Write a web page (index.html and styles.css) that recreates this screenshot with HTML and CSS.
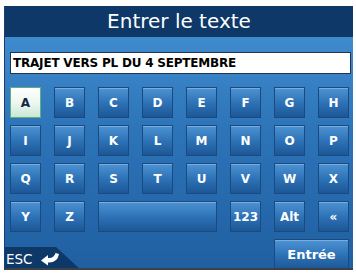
FILE: index.html
```html
<!DOCTYPE html>
<html>
<head>
<meta charset="utf-8">
<link rel="stylesheet" href="styles.css">
</head>
<body>
<div class="screen">
  <div class="header">Entrer le texte</div>
  <div class="body">
    <div class="input">TRAJET VERS PL DU 4 SEPTEMBRE</div>
    <div class="keys">
      <div class="key sel">A</div>
      <div class="key">B</div>
      <div class="key">C</div>
      <div class="key">D</div>
      <div class="key">E</div>
      <div class="key">F</div>
      <div class="key">G</div>
      <div class="key">H</div>
      <div class="key">I</div>
      <div class="key">J</div>
      <div class="key">K</div>
      <div class="key">L</div>
      <div class="key">M</div>
      <div class="key">N</div>
      <div class="key">O</div>
      <div class="key">P</div>
      <div class="key">Q</div>
      <div class="key">R</div>
      <div class="key">S</div>
      <div class="key">T</div>
      <div class="key">U</div>
      <div class="key">V</div>
      <div class="key">W</div>
      <div class="key">X</div>
      <div class="key">Y</div>
      <div class="key">Z</div>
      <div class="key space"></div>
      <div class="key">123</div>
      <div class="key">Alt</div>
      <div class="key small">«</div>
      <div class="esc">ESC
        <svg class="ret" width="20" height="14" viewBox="0 0 20 14"><path d="M1 8.5 L8 3 L8 6 Q14 6.5 15.5 1 L19 2 Q17.5 11 8 10.5 L8 13.5 Z" fill="#fff"/></svg>
      </div>
      <div class="key enter">Entrée</div>
    </div>
  </div>
</div>
</body>
</html>
```
FILE: styles.css
```css
html, body {
  margin: 0;
  padding: 0;
  background: #fff;
}
body {
  width: 356px;
  height: 273px;
  overflow: hidden;
}
.screen {
  margin: 6px 3px 0 4px;
  height: 262px;
  border-left: 1px solid #1a3f6c;
  border-bottom: 2px solid #3a3f48;
  display: flex;
  flex-direction: column;
  overflow: hidden;
  font-family: "DejaVu Sans", sans-serif;
}
.header {
  height: 31px;
  flex: none;
  background: #0d3867;
  color: #fff;
  font-size: 20px;
  line-height: 31px;
  text-align: center;
}
.body {
  flex: 1;
  background: linear-gradient(180deg, #3f8bcd 0%, #2d74b8 40%, #205fa2 100%);
  padding: 15px 2px 0 5px;
  overflow: hidden;
}
.input {
  height: 20px;
  background: #fff;
  border: 1px solid #1f3550;
  font-weight: bold;
  font-size: 12px;
  line-height: 20px;
  padding-left: 2px;
  color: #000;
  white-space: nowrap;
  letter-spacing: -0.2px;
}
.keys {
  margin-top: 13px;
  display: grid;
  grid-template-columns: repeat(8, 31px);
  grid-template-rows: repeat(4, 31px) 31px;
  column-gap: 13px;
  row-gap: 7px;
}
.key {
  box-sizing: border-box;
  border: 1px solid #1a4a80;
  background: linear-gradient(180deg, #4d93d3 0%, #2e73b7 50%, #1c5796 100%);
  box-shadow: inset 0 1px 0 rgba(255,255,255,0.25);
  color: #fff;
  font-weight: bold;
  font-size: 12px;
  display: flex;
  align-items: center;
  justify-content: center;
}
.key.sel {
  background: linear-gradient(180deg, #ffffff 0%, #eef7f1 50%, #cbe7d6 100%);
  border: 1px solid #5fae85;
  color: #13284a;
  box-shadow: none;
}
.key.space {
  grid-column: 3 / span 3;
}
.key.small {
  font-size: 12px;
}
.esc {
  grid-column: 1 / span 2;
  align-self: end;
  margin-left: -6px;
  height: 23px;
  width: 77px;
  background: #0d3867;
  clip-path: polygon(0 0, 52px 0, 77px 100%, 0 100%);
  color: #fff;
  font-size: 13.5px;
  display: flex;
  align-items: center;
  padding-left: 2px;
  box-sizing: border-box;
  gap: 7px;
}
.ret {
  display: block;
}
.key.enter {
  grid-column: 7 / span 2;
  font-size: 13px;
}
```
